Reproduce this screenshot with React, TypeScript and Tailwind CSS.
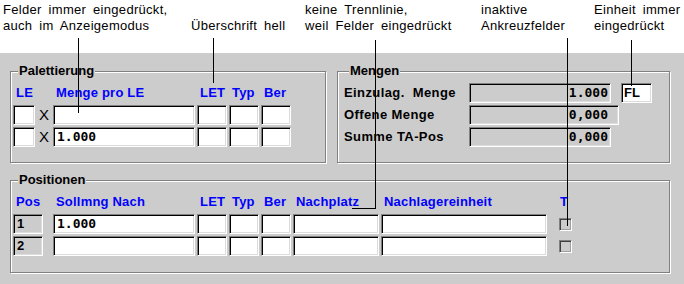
import React from "react";

const sunken =
  "h-[20px] border border-t-[#808080] border-l-[#808080] border-b-white border-r-white shadow-[inset_1px_1px_0_#000,inset_-1px_-1px_0_#dcdcdc]";
const field = `${sunken} bg-white`;
const grayField = `${sunken} bg-[#cccccc]`;
const frame =
  "border border-[#808080] shadow-[inset_1px_1px_0_#fff,1px_1px_0_#fff]";
const mono = "font-['DejaVu_Sans_Mono','Liberation_Mono',monospace] font-bold text-[13px] leading-[18px]";

function Title({ children }: { children: React.ReactNode }) {
  return (
    <div className="-mt-[9px] ml-[5px] w-fit bg-[#cccccc] px-[1px] h-[16px] leading-[16px] font-bold text-black">
      {children}
    </div>
  );
}

function Head({ w, children }: { w: string; children?: React.ReactNode }) {
  return <div className={`${w} pl-[3px] text-[#0000ff] font-bold tracking-[0.2px] whitespace-nowrap`}>{children}</div>;
}

function Check() {
  return (
    <div className="w-[13px] h-[13px] border border-t-[#808080] border-l-[#808080] border-b-white border-r-white bg-[#cccccc] shadow-[inset_1px_1px_0_#404040,inset_-1px_-1px_0_#a0a0a0]" />
  );
}

function PalRow({ value }: { value?: string }) {
  return (
    <div className="flex items-center">
      <div className={`${field} w-[22px]`} />
      <div className="w-[18px] pl-[4px] text-[15px] leading-[20px] font-normal">X</div>
      <div className={`${field} w-[142px] pl-[3px] ${mono}`}>{value}</div>
      <div className="flex gap-[2px] ml-[2px]">
        <div className={`${field} w-[30px]`} />
        <div className={`${field} w-[30px]`} />
        <div className={`${field} w-[30px]`} />
      </div>
    </div>
  );
}

function PosRow({ pos, value }: { pos: string; value?: string }) {
  return (
    <div className="flex items-center">
      <div className={`${grayField} w-[30px] pl-[3px] leading-[18px] font-bold`}>{pos}</div>
      <div className={`${field} w-[142px] ml-[10px] pl-[3px] ${mono}`}>{value}</div>
      <div className="flex gap-[2px] ml-[2px]">
        <div className={`${field} w-[30px]`} />
        <div className={`${field} w-[30px]`} />
        <div className={`${field} w-[30px]`} />
        <div className={`${field} w-[86px]`} />
        <div className={`${field} w-[166px]`} />
      </div>
      <div className="ml-[12px]">
        <Check />
      </div>
    </div>
  );
}

function MengeRow({ label, value, w, pr }: { label: string; value: string; w: string; pr: string }) {
  return (
    <div className="flex items-center">
      <div className="w-[125px] font-bold tracking-[0.4px] whitespace-pre">{label}</div>
      <div className={`${grayField} ${w} ${pr} text-right ${mono}`}>{value}</div>
    </div>
  );
}

export default function App() {
  return (
    <div className="relative w-[684px] h-[284px] bg-white overflow-hidden font-['Liberation_Sans',Arial,sans-serif] text-[13px] leading-[16px] text-black">
      {/* callouts */}
      <div className="h-[53px] flex pt-[2px] tracking-[0.3px] [word-spacing:3px]">
        <div className="ml-[3px] w-[188px]">
          <div>Felder immer eingedrückt,</div>
          <div>auch im Anzeigemodus</div>
        </div>
        <div className="w-[114px] pt-[16px]">Überschrift hell</div>
        <div className="w-[176px]">
          <div>keine Trennlinie,</div>
          <div>weil Felder eingedrückt</div>
        </div>
        <div className="w-[113px]">
          <div>inaktive</div>
          <div>Ankreuzfelder</div>
        </div>
        <div>
          <div>Einheit immer</div>
          <div>eingedrückt</div>
        </div>
      </div>

      <div className="h-[231px] bg-[#cccccc] pt-[18px] pl-[10px]">
        <div className="flex gap-[11px]">
          {/* Palettierung */}
          <div className={`${frame} w-[316px] h-[92px] pl-[2px]`}>
            <Title>Palettierung</Title>
            <div className="flex mt-[6px] h-[16px]">
              <Head w="w-[40px]">LE</Head>
              <Head w="w-[144px]">Menge pro LE</Head>
              <Head w="w-[32px]">LET</Head>
              <Head w="w-[32px]">Typ</Head>
              <Head w="w-[32px]">Ber</Head>
            </div>
            <div className="flex flex-col gap-[2px] mt-[4px]">
              <PalRow />
              <PalRow value="1.000" />
            </div>
          </div>

          {/* Mengen */}
          <div className={`${frame} w-[333px] h-[92px] pl-[6px]`}>
            <Title>Mengen</Title>
            <div className="flex mt-[4px]">
              <div className="flex flex-col gap-[2px]">
                <MengeRow label="Einzulag.  Menge" value="1.000" w="w-[142px]" pr="pr-[2px]" />
                <MengeRow label="Offene Menge" value="0,000" w="w-[150px]" pr="pr-[10px]" />
                <MengeRow label="Summe TA-Pos" value="0,000" w="w-[142px]" pr="pr-[2px]" />
              </div>
              <div className={`${field} w-[31px] ml-[2px] pl-[2px] font-bold leading-[18px]`}>FL</div>
            </div>
          </div>
        </div>

        {/* Positionen */}
        <div className={`${frame} w-[660px] h-[93px] mt-[17px] pl-[2px]`}>
          <Title>Positionen</Title>
          <div className="flex mt-[6px] h-[16px]">
            <Head w="w-[40px]">Pos</Head>
            <Head w="w-[144px]">Sollmng Nach</Head>
            <Head w="w-[32px]">LET</Head>
            <Head w="w-[32px]">Typ</Head>
            <Head w="w-[32px]">Ber</Head>
            <Head w="w-[88px]">Nachplatz</Head>
            <Head w="w-[176px]">Nachlagereinheit</Head>
            <Head w="w-[20px]">T</Head>
          </div>
          <div className="flex flex-col gap-[2px] mt-[4px]">
            <PosRow pos="1" value="1.000" />
            <PosRow pos="2" />
          </div>
        </div>
      </div>

      {/* leader lines */}
      <div className="absolute left-[78px] top-[38px] w-px h-[75px] bg-black" />
      <div className="absolute left-[213px] top-[38px] w-px h-[45px] bg-black" />
      <div className="absolute left-[375px] top-[40px] w-px h-[169px] bg-black" />
      <div className="absolute left-[352px] top-[208px] w-[24px] h-px bg-black" />
      <div className="absolute left-[567px] top-[38px] w-px h-[188px] bg-black" />
      <div className="absolute left-[631px] top-[40px] w-px h-[46px] bg-black" />
    </div>
  );
}
